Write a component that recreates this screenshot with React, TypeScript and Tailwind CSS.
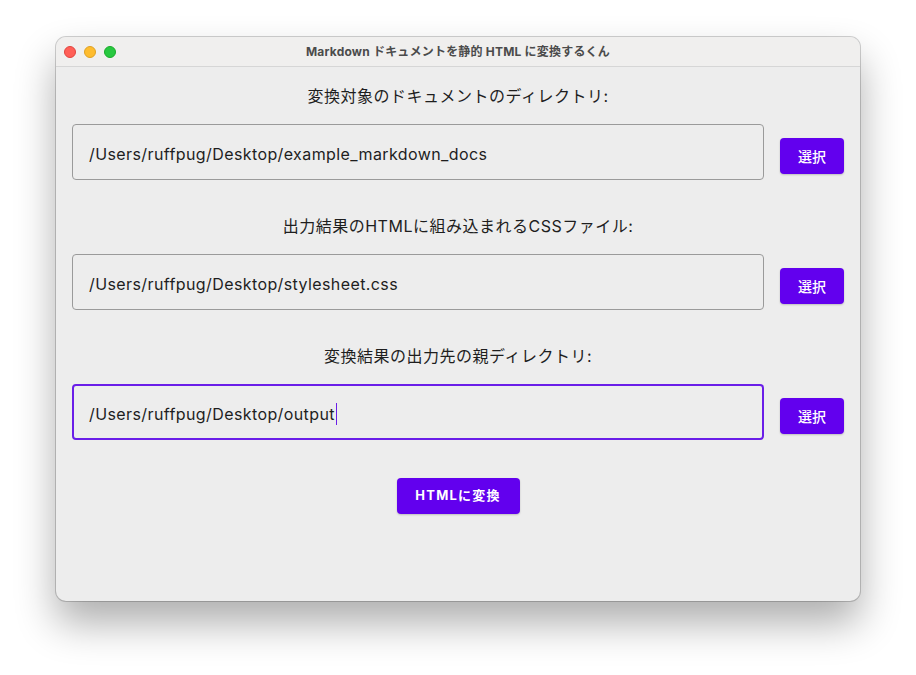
const fields = [
  { label: '変換対象のドキュメントのディレクトリ:', value: '/Users/ruffpug/Desktop/example_markdown_docs', focused: false },
  { label: '出力結果のHTMLに組み込まれるCSSファイル:', value: '/Users/ruffpug/Desktop/stylesheet.css', focused: false },
  { label: '変換結果の出力先の親ディレクトリ:', value: '/Users/ruffpug/Desktop/output', focused: true },
];

const font = "font-['Inter','Noto_Sans_CJK_JP',sans-serif]";

export default function App() {
  return (
    <div className={`min-h-[675px] w-[916px] bg-white pl-[56px] pt-[37px] ${font}`}>
      <div className="flex h-[564px] w-[804px] flex-col overflow-hidden rounded-[10px] bg-[#ededed] shadow-[0_0_0_1px_rgba(0,0,0,0.18),0_22px_40px_rgba(0,0,0,0.32)]">
        {/* title bar */}
        <div className="relative flex h-[30px] shrink-0 items-center justify-center border-b border-[#d6d6d6] bg-[#f0efee]">
          <div className="absolute left-[8px] top-[9px] flex gap-[8px]">
            <span className="h-[12px] w-[12px] rounded-full border border-[#e0443e] bg-[#ff5f57]" />
            <span className="h-[12px] w-[12px] rounded-full border border-[#dea123] bg-[#febc2e]" />
            <span className="h-[12px] w-[12px] rounded-full border border-[#1aab29] bg-[#28c840]" />
          </div>
          <span className="whitespace-pre text-[12px] font-bold tracking-[0.2px] text-[#4b4b4b]">
            Markdown ドキュメントを静的 HTML に変換するくん
          </span>
        </div>

        {/* content */}
        <div className="flex flex-col px-[16px] pt-[19px]">
          {fields.map((f, i) => (
            <div key={i} className="flex flex-col pb-[36px]">
              <div className="h-[20px] text-center text-[16px] leading-[20px] tracking-[0.5px] text-[#1e1e1e]">{f.label}</div>
              <div className="mt-[18px] flex items-start gap-[16px]">
                <div
                  className={
                    f.focused
                      ? 'flex h-[56px] flex-1 items-center rounded-[4px] border-2 border-[#6a1ee8] px-[15px] pt-[4px]'
                      : 'flex h-[56px] flex-1 items-center rounded-[4px] border border-[#9a9a9a] px-[16px] pt-[4px]'
                  }
                >
                  <span className="text-[16px] tracking-[0.4px] text-[#1e1e1e]">{f.value}</span>
                  {f.focused && <span className="ml-px h-[22px] w-px bg-[#6a1ee8]" />}
                </div>
                <button className="mt-[14px] h-[36px] w-[64px] rounded-[4px] bg-[#6200ee] text-[14px] font-medium text-white shadow-[0_1px_2px_rgba(0,0,0,0.2)]">
                  選択
                </button>
              </div>
            </div>
          ))}
          <div className="mt-[2px] flex justify-center">
            <button className="h-[36px] w-[123px] rounded-[4px] bg-[#6200ee] text-[13px] font-bold tracking-[1.2px] text-white shadow-[0_1px_2px_rgba(0,0,0,0.2)]">
              HTMLに変換
            </button>
          </div>
        </div>
      </div>
    </div>
  );
}
